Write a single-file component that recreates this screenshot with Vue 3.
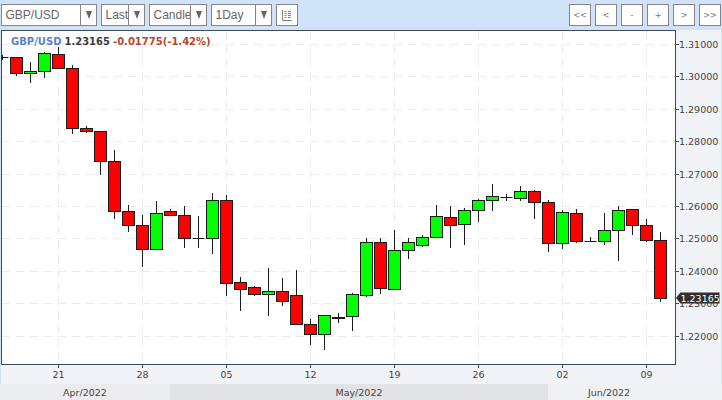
<script setup>
const selects = [
  { label: 'GBP/USD', cls: 'w-pair' },
  { label: 'Last', cls: 'w-last' },
  { label: 'Candle', cls: 'w-candle' },
  { label: '1Day', cls: 'w-day' }
]
const navs = ['<<', '<', '-', '+', '>', '>>']
// wick top, wick bottom, body top, body bottom
const raw = [
  [55, 60, 57, 57], [57, 76, 57, 73], [62, 83, 73, 71], [52, 78, 71, 53], [47, 68, 54, 68],
  [65, 134, 68, 128], [126, 133, 128, 131], [131, 175, 131, 161], [150, 219, 161, 211], [205, 232, 211, 225],
  [215, 267, 225, 249], [201, 249, 249, 213], [209, 215, 211, 215], [206, 248, 215, 238], [216, 248, 238, 238],
  [193, 254, 238, 200], [195, 296, 200, 283], [277, 311, 282, 289], [286, 296, 287, 294], [268, 316, 294, 291],
  [278, 306, 291, 301], [270, 325, 295, 324], [319, 345, 324, 334], [315, 350, 334, 315], [313, 323, 318, 317],
  [293, 331, 316, 294], [238, 297, 295, 242], [238, 294, 242, 288], [230, 290, 289, 250], [238, 259, 250, 242],
  [235, 247, 245, 237], [205, 238, 237, 216], [206, 248, 217, 225], [208, 245, 224, 210], [199, 222, 210, 200],
  [184, 211, 200, 196], [194, 201, 197, 197], [186, 201, 198, 191], [190, 219, 191, 202], [200, 252, 202, 243],
  [210, 249, 243, 212], [209, 243, 213, 241], [237, 242, 241, 241], [213, 245, 241, 230], [206, 261, 230, 210],
  [209, 235, 209, 225], [219, 242, 225, 240], [232, 302, 240, 298]
]
const candles = raw.map((r, i) => {
  const [wt, wb, open, close] = r
  return {
    x: 1.5 + i * 14,
    wt, wb,
    top: Math.min(open, close) + 0.5,
    h: Math.abs(close - open),
    fill: close < open ? '#00ff00' : '#ff0000'
  }
})
const levels = ['1.31000', '1.30000', '1.29000', '1.28000', '1.27000', '1.26000', '1.25000', '1.24000', '1.23000', '1.22000']
  .map((t, i) => ({ t, y: Math.round(14 + i * 32.4) + 0.5 }))
const ticks = [['21', 57.5], ['28', 141.5], ['05', 225.5], ['12', 309.5], ['19', 393.5], ['26', 477.5], ['02', 561.5], ['09', 645.5]]
  .map(([t, x]) => ({ t, x }))
const months = [
  { label: 'Apr/2022', cls: 'apr' },
  { label: 'May/2022', cls: 'may' },
  { label: 'Jun/2022', cls: 'jun' }
]
</script>

<template>
  <div class="page">
    <div class="toolbar">
      <div class="group">
        <div v-for="s in selects" :key="s.label" class="select" :class="s.cls">
          <span class="value">{{ s.label }}</span>
          <span class="drop"><i class="tri"></i></span>
        </div>
        <button class="icon-btn">
          <svg width="12" height="13" viewBox="0 0 12 13">
            <path d="M1.500 1v10.500H11M3.500 2.500h2M7 2.500h3M3.500 4.500h2M7 4.500h3M3.500 6.500h2M7 6.500h3M3.500 8.500h2M7 8.500h3" fill="none" stroke="#808080" stroke-width="1"/>
          </svg>
        </button>
      </div>
      <div class="nav">
        <button v-for="n in navs" :key="n" class="nav-btn">{{ n }}</button>
      </div>
    </div>

    <div class="chart">
      <svg class="plot" width="720" height="354" viewBox="0 0 720 354">
        <rect x="0" y="0" width="720" height="354" fill="#f2f3f6"/>
        <rect x="0.500" y="0.500" width="674" height="334" fill="#fff" stroke="#3f4a55" stroke-width="1"/>
        <g stroke="#ececec" stroke-dasharray="8 6" stroke-width="1">
          <line v-for="l in levels" :key="l.t" x1="1" :y1="l.y" x2="674" :y2="l.y"/>
          <line v-for="t in ticks" :key="t.t" :x1="t.x" y1="1" :x2="t.x" y2="334"/>
        </g>
        <g stroke="#3f4a55">
          <line v-for="l in levels" :key="l.t" x1="675" :y1="l.y" x2="678" :y2="l.y"/>
          <line v-for="t in ticks" :key="t.t" :x1="t.x" y1="335" :x2="t.x" y2="338"/>
        </g>
        <g transform="translate(0,-30)">
          <g v-for="(c, i) in candles" :key="i">
            <line :x1="c.x" :y1="c.wt" :x2="c.x" :y2="c.wb" stroke="#1c1c1c"/>
            <line v-if="c.h === 0" :x1="c.x - 6" :y1="c.top" :x2="c.x + 6" :y2="c.top" stroke="#1c1c1c"/>
            <rect v-else :x="c.x - 6" :y="c.top" width="12" :height="c.h" :fill="c.fill" stroke="#1c1c1c"/>
          </g>
        </g>
        <g class="axis-text">
          <text v-for="l in levels" :key="l.t" x="678" :y="l.y + 3.500">{{ l.t }}</text>
          <text v-for="t in ticks" :key="t.t" :x="t.x" y="348" text-anchor="middle">{{ t.t }}</text>
        </g>
        <path d="M675 268l4.500-5.500h39v11h-39z" fill="#2f2f2f"/>
        <text class="tag" x="679.500" y="271.500">1.23165</text>
      </svg>
      <div class="legend">
        <span class="sym">GBP/USD</span>
        <span class="px">1.23165</span>
        <span class="chg">-0.01775(-1.42%)</span>
      </div>
    </div>

    <div class="months">
      <div v-for="m in months" :key="m.label" class="month" :class="m.cls">{{ m.label }}</div>
    </div>
  </div>
</template>

<style scoped>
.page {
  width: 722px;
  height: 400px;
  background: #cfe2f8;
  display: flex;
  flex-direction: column;
  overflow: hidden;
  font-family: "DejaVu Sans", sans-serif;
}
.toolbar {
  height: 30px;
  box-sizing: border-box;
  padding: 4px 1px 0 1px;
  display: flex;
  justify-content: space-between;
}
.group {
  display: flex;
  gap: 4px;
}
.select {
  height: 22px;
  box-sizing: border-box;
  border: 1px solid #858585;
  background: #fff;
  display: flex;
  font-family: "Liberation Sans", sans-serif;
  font-size: 12px;
  color: #666;
}
.w-pair { width: 96px; }
.w-last { width: 44px; }
.w-candle { width: 58px; }
.w-day { width: 61px; }
.value {
  flex: 1;
  min-width: 0;
  overflow: hidden;
  padding-left: 3.500px;
  line-height: 20px;
  white-space: nowrap;
}
.drop {
  width: 16px;
  box-sizing: border-box;
  border-left: 1px solid #858585;
  display: flex;
  align-items: center;
  justify-content: center;
  flex: none;
}
.tri {
  width: 0;
  height: 0;
  border-left: 3.500px solid transparent;
  border-right: 3.500px solid transparent;
  border-top: 8px solid #666;
}
.icon-btn, .nav-btn {
  width: 22px;
  height: 22px;
  padding: 0;
  box-sizing: border-box;
  border: 1px solid #858585;
  background: #fff;
  display: flex;
  align-items: center;
  justify-content: center;
}
.nav {
  display: flex;
  gap: 4px;
}
.nav-btn {
  font-family: "DejaVu Sans", sans-serif;
  font-size: 8px;
  color: #777;
}
.chart {
  position: relative;
  margin-left: 1px;
  width: 720px;
  height: 354px;
}
.plot {
  display: block;
}
.axis-text text {
  font-family: "DejaVu Sans", sans-serif;
  font-size: 9.500px;
  fill: #444;
}
.tag {
  font-family: "DejaVu Sans", sans-serif;
  font-size: 9.500px;
  fill: #fff;
}
.legend {
  position: absolute;
  left: 10px;
  top: 5px;
  line-height: 13px;
  font-size: 10px;
  font-weight: bold;
  display: flex;
  gap: 3px;
  white-space: nowrap;
}
.sym { color: #5b82c8; }
.px { color: #3c3c3c; }
.chg { color: #b8472e; }
.months {
  display: flex;
  height: 16px;
  font-size: 9.500px;
  color: #444;
}
.month {
  display: flex;
  align-items: center;
  justify-content: center;
}
.apr { width: 170px; background: #ebecee; }
.may { width: 378px; background: #e2e3e5; }
.jun { width: 174px; background: #f0f1f3; padding-right: 52px; box-sizing: border-box; }
</style>
